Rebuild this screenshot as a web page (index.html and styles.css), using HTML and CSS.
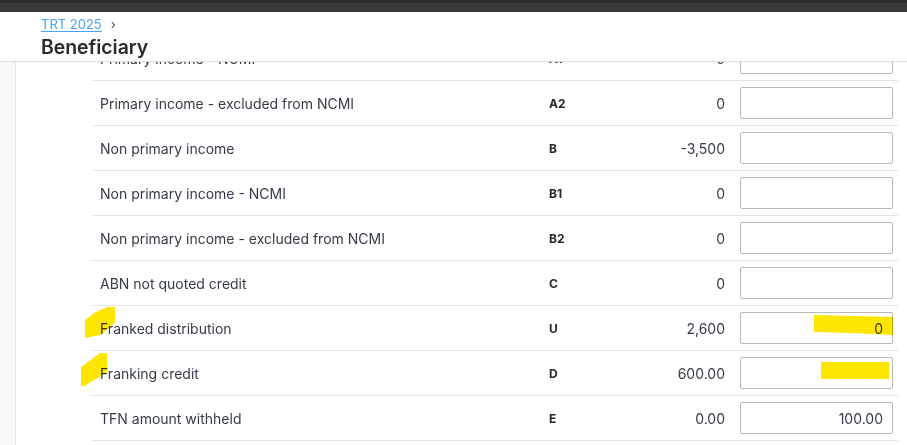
FILE: index.html
```html
<!DOCTYPE html>
<html>
<head>
<meta charset="utf-8">
<link rel="stylesheet" href="styles.css">
</head>
<body>
<div class="topbar"></div>
<header class="header">
  <div class="crumbs"><a class="crumb-link" href="#">TRT 2025</a><span class="crumb-sep">›</span></div>
  <h1 class="title">Beneficiary</h1>
</header>
<div class="main">
  <aside class="sidebar"></aside>
  <section class="content">
    <div class="table">
      <div class="row"><div class="label">Primary income - NCMI</div><div class="code">A1</div><div class="value">0</div><div class="cell-input"><input class="field" type="text" value=""></div></div>
      <div class="row"><div class="label">Primary income - excluded from NCMI</div><div class="code">A2</div><div class="value">0</div><div class="cell-input"><input class="field" type="text" value=""></div></div>
      <div class="row"><div class="label">Non primary income</div><div class="code">B</div><div class="value">-3,500</div><div class="cell-input"><input class="field" type="text" value=""></div></div>
      <div class="row"><div class="label">Non primary income - NCMI</div><div class="code">B1</div><div class="value">0</div><div class="cell-input"><input class="field" type="text" value=""></div></div>
      <div class="row"><div class="label">Non primary income - excluded from NCMI</div><div class="code">B2</div><div class="value">0</div><div class="cell-input"><input class="field" type="text" value=""></div></div>
      <div class="row"><div class="label">ABN not quoted credit</div><div class="code">C</div><div class="value">0</div><div class="cell-input"><input class="field" type="text" value=""></div></div>
      <div class="row"><div class="label">Franked distribution</div><div class="code">U</div><div class="value">2,600</div><div class="cell-input"><input class="field" type="text" value="0"></div></div>
      <div class="row"><div class="label">Franking credit</div><div class="code">D</div><div class="value">600.00</div><div class="cell-input"><input class="field" type="text" value=""></div></div>
      <div class="row"><div class="label">TFN amount withheld</div><div class="code">E</div><div class="value">0.00</div><div class="cell-input"><input class="field" type="text" value="100.00"></div></div>
    </div>
  </section>
</div>
<svg class="marks" width="907" height="445" viewBox="0 0 907 445">
  <polygon points="85,320 96,312 107,307 115,307 115,322 108,329 100,335 85,338" />
  <polygon points="81,367 92,359 100,353 107,353 107,372 98,378 90,382 85,386 81,386" />
  <polygon points="814,315 893,317 893,335 850,333 814,332" />
  <polygon points="821,362 889,362 889,379 821,379" />
</svg>
</body>
</html>
```

FILE: styles.css
```css
* { box-sizing: border-box; }
html, body { margin: 0; padding: 0; }
body {
  width: 907px;
  height: 445px;
  overflow: hidden;
  background: #ffffff;
  font-family: Inter, "Liberation Sans", sans-serif;
  color: #353c47;
  position: relative;
}
.topbar {
  height: 12px;
  background: #393939;
  border-top: 3px solid #2c2c2c;
}
.header {
  height: 50px;
  padding: 3px 0 0 41px;
  background: #ffffff;
  border-bottom: 1px solid #dddddd;
  position: relative;
  z-index: 2;
}
.crumbs {
  display: flex;
  align-items: center;
  gap: 9px;
  height: 17px;
  font-size: 13px;
}
.crumb-link {
  color: #4aa2f2;
  text-decoration: underline;
  text-underline-offset: 2px;
}
.crumb-sep {
  color: #555;
  font-size: 13px;
}
.title {
  margin: 2px 0 0;
  font-size: 19.4px;
  font-weight: 600;
  color: #2a2a2a;
  line-height: 26px;
}
.main {
  display: flex;
  height: 383px;
  overflow: hidden;
}
.sidebar {
  width: 16px;
  flex: none;
  background: #f7f8fa;
  border-right: 1px solid #e4e5e8;
}
.content {
  flex: 1;
  padding: 0 9px 0 76px;
}
.table {
  margin-top: -26px;
}
.row {
  display: grid;
  grid-template-columns: 457px 80px 111px 153px;
  align-items: center;
  height: 45px;
  border-bottom: 1px solid #e3e5e8;
  font-size: 14px;
}
.label {
  padding-left: 8px;
  white-space: nowrap;
}
.code {
  font-size: 12px;
  font-weight: 700;
  color: #262626;
}
.value {
  text-align: right;
  padding-right: 15px;
}
.cell-input {
  display: flex;
}
.field {
  width: 153px;
  height: 32px;
  border: 1px solid #b8b8b8;
  border-radius: 2px;
  padding: 0 9px;
  text-align: right;
  font-family: Inter, "Liberation Sans", sans-serif;
  font-size: 14px;
  color: #353c47;
  background: #fff;
}
.marks {
  position: absolute;
  left: 0;
  top: 0;
  pointer-events: none;
  mix-blend-mode: multiply;
  z-index: 5;
}
.marks polygon {
  fill: #ffe600;
}
```
